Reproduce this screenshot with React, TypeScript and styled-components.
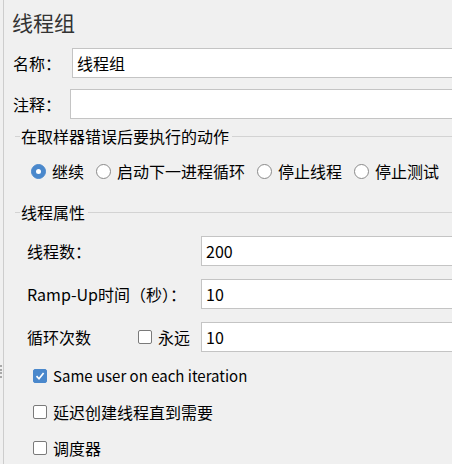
import React from "react";
import styled, { createGlobalStyle } from "styled-components";

const GlobalStyle = createGlobalStyle`
  html, body {
    margin: 0;
    padding: 0;
    background: #f0f0f0;
    overflow: hidden;
  }
  body {
    font-family: "Noto Sans CJK SC", "Noto Sans", sans-serif;
    font-size: 16px;
    color: #000;
  }
`;

const Page = styled.div`
  position: relative;
  width: 452px;
  height: 464px;
  display: flex;
  overflow: hidden;
`;

const Splitter = styled.div`
  width: 3px;
  border-right: 1px solid #cdcdcd;
  flex: none;
`;

const Grip = styled.div`
  position: absolute;
  left: 0;
  top: 365px;
  width: 3px;
  height: 13px;
  display: flex;
  flex-direction: column;
  justify-content: space-between;
  & > span {
    display: block;
    width: 2px;
    height: 2px;
    background: #a8a8a8;
  }
`;

const Content = styled.div`
  flex: 1;
  min-width: 0;
  display: flex;
  flex-direction: column;
  padding: 10px 0 0 8px;
  margin-right: -6px;
`;

const Title = styled.div`
  font-size: 21px;
  line-height: 24px;
  color: #333;
`;

const FieldRow = styled.div<{ $mt: number; $gap: number }>`
  display: flex;
  align-items: center;
  height: 30px;
  margin-top: ${(p) => p.$mt}px;
  padding-left: 1px;
  gap: ${(p) => p.$gap}px;
`;

const Label = styled.span`
  line-height: 20px;
  white-space: nowrap;
`;

const TextInput = styled.div`
  flex: 1;
  box-sizing: border-box;
  height: 30px;
  background: #fff;
  border: 1px solid #c4c4c4;
  padding: 0 4px;
  display: flex;
  align-items: center;
  line-height: 20px;
  color: #000;
`;

const Legend = styled.div<{ $mt: number }>`
  display: flex;
  align-items: center;
  height: 20px;
  margin-top: ${(p) => p.$mt}px;
  padding-left: 3px;
  line-height: 20px;
  white-space: nowrap;
  &::before {
    content: "";
    width: 5px;
    height: 1px;
    background: #d3d3d3;
    margin-right: 1px;
  }
  &::after {
    content: "";
    flex: 1;
    height: 1px;
    background: #d3d3d3;
    margin-left: 3px;
  }
`;

const RadioRow = styled.div`
  display: flex;
  align-items: center;
  height: 20px;
  margin-top: 15px;
  padding-left: 19px;
  gap: 12px;
`;

const Choice = styled.label`
  display: flex;
  align-items: center;
  gap: 6px;
  line-height: 20px;
  white-space: nowrap;
`;

const RadioDot = styled.span<{ $on?: boolean }>`
  box-sizing: border-box;
  width: 15px;
  height: 15px;
  border-radius: 50%;
  flex: none;
  background: ${(p) => (p.$on ? "#4a88cc" : "#fff")};
  border: 1px solid ${(p) => (p.$on ? "#4a88cc" : "#8a8a8a")};
  display: flex;
  align-items: center;
  justify-content: center;
  &::after {
    content: "";
    display: ${(p) => (p.$on ? "block" : "none")};
    width: 5px;
    height: 5px;
    border-radius: 50%;
    background: #fff;
  }
`;

const Box = styled.span<{ $on?: boolean }>`
  box-sizing: border-box;
  width: 14px;
  height: 14px;
  flex: none;
  border-radius: 2px;
  background: ${(p) => (p.$on ? "#4a88cc" : "#fff")};
  border: 1px solid ${(p) => (p.$on ? "#4a88cc" : "#7a7a7a")};
  display: flex;
  align-items: center;
  justify-content: center;
`;

const PropGrid = styled.div`
  display: grid;
  grid-template-columns: 174px 1fr;
  row-gap: 13px;
  margin-top: 14px;
  padding-left: 15px;
`;

const PropLabel = styled.div`
  display: flex;
  align-items: center;
  justify-content: space-between;
  padding-right: 11px;
  line-height: 20px;
  white-space: nowrap;
`;

const CheckList = styled.div`
  display: flex;
  flex-direction: column;
  gap: 16px;
  margin-top: 14px;
  padding-left: 21px;
`;

const CheckRow = styled(Choice)`
  height: 20px;
`;

const LatinText = styled.span`
  font-size: 15px;
`;

const Check = () => (
  <svg width="10" height="10" viewBox="0 0 10 10">
    <polyline points="1.5,5.2 4,7.8 8.6,2" fill="none" stroke="#fff" strokeWidth="1.7" />
  </svg>
);

export default function App() {
  return (
    <>
      <GlobalStyle />
      <Page>
        <Splitter />
        <Grip>
          <span />
          <span />
          <span />
          <span />
        </Grip>
        <Content>
          <Title>线程组</Title>
          <FieldRow $mt={14} $gap={11}>
            <Label>名称：</Label>
            <TextInput>线程组</TextInput>
          </FieldRow>
          <FieldRow $mt={11} $gap={9}>
            <Label>注释：</Label>
            <TextInput />
          </FieldRow>
          <Legend $mt={7}>在取样器错误后要执行的动作</Legend>
          <RadioRow>
            <Choice><RadioDot $on />继续</Choice>
            <Choice><RadioDot />启动下一进程循环</Choice>
            <Choice><RadioDot />停止线程</Choice>
            <Choice><RadioDot />停止测试</Choice>
          </RadioRow>
          <Legend $mt={21}>线程属性</Legend>
          <PropGrid>
            <PropLabel>线程数：</PropLabel>
            <TextInput>200</TextInput>
            <PropLabel>Ramp-Up时间（秒）：</PropLabel>
            <TextInput>10</TextInput>
            <PropLabel>
              循环次数
              <Choice><Box />永远</Choice>
            </PropLabel>
            <TextInput>10</TextInput>
          </PropGrid>
          <CheckList>
            <CheckRow><Box $on><Check /></Box><LatinText>Same user on each iteration</LatinText></CheckRow>
            <CheckRow><Box />延迟创建线程直到需要</CheckRow>
            <CheckRow><Box />调度器</CheckRow>
          </CheckList>
        </Content>
      </Page>
    </>
  );
}
